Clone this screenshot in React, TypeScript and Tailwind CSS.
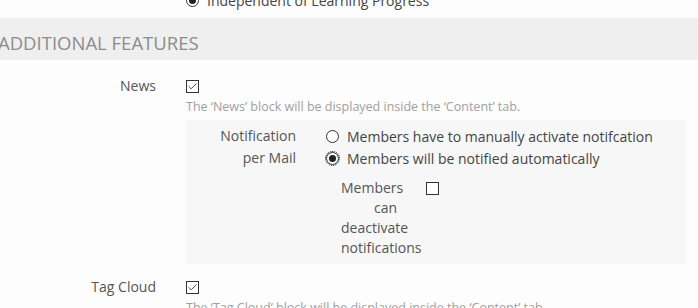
import { Check } from 'lucide-react';

function Checkbox({ checked }: { checked?: boolean }) {
  return (
    <span className="inline-flex w-[13px] h-[13px] border border-[#333] bg-white items-center justify-center">
      {checked && <Check className="w-[11px] h-[11px] text-[#333]" strokeWidth={2} />}
    </span>
  );
}

function Radio({ checked, focused }: { checked?: boolean; focused?: boolean }) {
  return (
    <span className={`inline-flex w-[13px] h-[13px] rounded-full border border-[#333] bg-white items-center justify-center ${focused ? 'outline-1 outline-dotted outline-[#222]' : ''}`}>
      {checked && <span className="w-[7px] h-[7px] rounded-full bg-[#222]" />}
    </span>
  );
}

export default function App() {
  return (
    <div className="w-[698px] h-[308px] overflow-hidden bg-[#fdfdfd] text-[14px] text-[#555]" style={{ fontFamily: '"Open Sans", sans-serif' }}>
      {/* previous option, cut off at top */}
      <div className="-mt-[9px] pl-[186px] flex items-center gap-[8px] h-[18px] text-[#444]">
        <Radio checked />
        <span>Independent of Learning Progress</span>
      </div>

      {/* Section header */}
      <div className="mt-[9px] h-[42px] bg-[#efefef] flex items-center -ml-[2px] pt-[7px]">
        <h2 className="text-[18.5px] text-[#8c8c8c] uppercase">Additional Features</h2>
      </div>

      {/* News */}
      <div className="mt-[15px] flex">
        <div className="w-[156px] text-right leading-[22px]">News</div>
        <div className="pl-[30px] flex-1">
          <div className="h-[22px] flex items-center"><Checkbox checked /></div>
          <p className="text-[12.5px] text-[#a0a0a0] leading-[18px] mt-[1px]">The ‘News’ block will be displayed inside the ‘Content’ tab.</p>

          <div className="mt-[4px] mr-[12px] bg-[#f7f7f7] pt-[5px] pb-[6px]">
            <div className="flex">
              <div className="w-[110px] text-right leading-[22px]">Notification<br />per Mail</div>
              <div className="pl-[30px] text-[#444]">
                <div className="h-[22px] flex items-center gap-[8px]"><Radio /><span>Members have to manually activate notifcation</span></div>
                <div className="h-[22px] flex items-center gap-[8px]"><Radio checked focused /><span>Members will be notified automatically</span></div>
                <div className="mt-[9px] ml-[15px] flex gap-[5px] text-[#555]">
                  <div className="leading-[20px]">
                    <div>Members</div>
                    <div className="pl-[33px]">can</div>
                    <div>deactivate</div>
                    <div>notifications</div>
                  </div>
                  <div className="pt-[1px]"><Checkbox /></div>
                </div>
              </div>
            </div>
          </div>
        </div>
      </div>

      {/* Tag Cloud */}
      <div className="mt-[12px] flex">
        <div className="w-[156px] text-right leading-[22px]">Tag Cloud</div>
        <div className="pl-[30px] flex-1">
          <div className="h-[22px] flex items-center"><Checkbox checked /></div>
          <p className="text-[12.5px] text-[#a0a0a0] leading-[18px] mt-[1px]">The ‘Tag Cloud’ block will be displayed inside the ‘Content’ tab.</p>
        </div>
      </div>
    </div>
  );
}
